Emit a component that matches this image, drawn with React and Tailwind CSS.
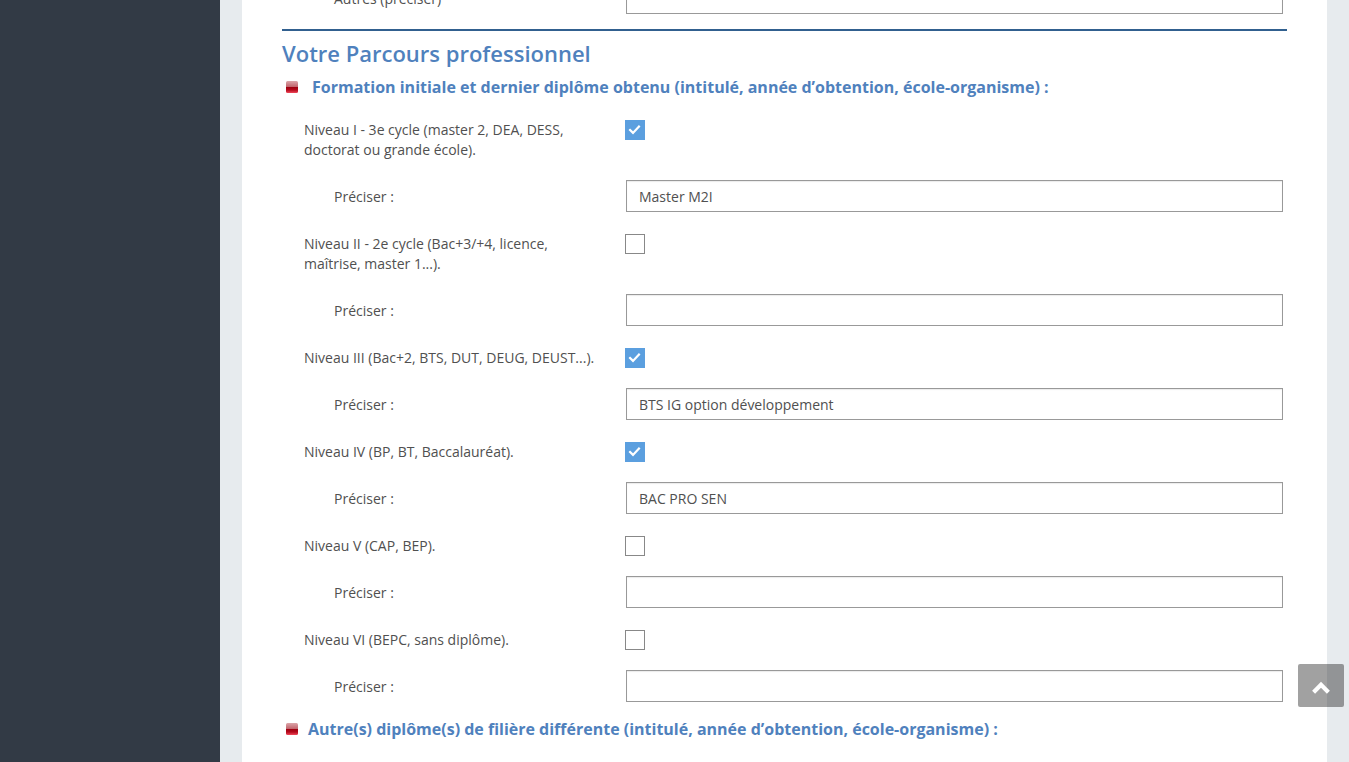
import React, { useState } from "react";

const niveaux = [
  {
    id: "niveau1",
    label: "Niveau I - 3e cycle (master 2, DEA, DESS, doctorat ou grande école).",
    checked: true,
    detail: "Master M2I",
  },
  {
    id: "niveau2",
    label: "Niveau II - 2e cycle (Bac+3/+4, licence, maîtrise, master 1...).",
    checked: false,
    detail: "",
  },
  {
    id: "niveau3",
    label: "Niveau III (Bac+2, BTS, DUT, DEUG, DEUST...).",
    checked: true,
    detail: "BTS IG option développement",
  },
  {
    id: "niveau4",
    label: "Niveau IV (BP, BT, Baccalauréat).",
    checked: true,
    detail: "BAC PRO SEN",
  },
  {
    id: "niveau5",
    label: "Niveau V (CAP, BEP).",
    checked: false,
    detail: "",
  },
  {
    id: "niveau6",
    label: "Niveau VI (BEPC, sans diplôme).",
    checked: false,
    detail: "",
  },
];

const TextInput = (props) => (
  <div className="pl-px">
    <input
      type="text"
      className="block h-8 w-full border border-[#999] bg-white px-3 text-sm text-[#505050] shadow-[inset_0_1px_1px_rgba(0,0,0,0.08)] outline-none focus:border-[#5b9fdf]"
      {...props}
    />
  </div>
);

const CheckBox = (props) => (
  <span className="grid size-5">
    <input
      type="checkbox"
      className="peer col-start-1 row-start-1 size-5 appearance-none border border-[#888] bg-white checked:border-[#5b9fdf] checked:bg-[#5b9fdf]"
      {...props}
    />
    <svg
      viewBox="0 0 20 20"
      className="pointer-events-none invisible col-start-1 row-start-1 size-5 peer-checked:visible"
      fill="none"
      stroke="#fff"
      strokeWidth="2.2"
    >
      <path d="M4.3 9.2 L8 12.9 L14.7 5.8" />
    </svg>
  </span>
);

const Bullet = () => (
  <svg viewBox="0 0 12 12" className="size-3 shrink-0" aria-hidden="true">
    <defs>
      <linearGradient id="bullet" x1="0" y1="0" x2="0" y2="1">
        <stop offset="0" stopColor="#dba5a9" />
        <stop offset="0.5" stopColor="#c0626a" />
        <stop offset="0.54" stopColor="#a00010" />
        <stop offset="0.75" stopColor="#b50a1c" />
        <stop offset="1" stopColor="#f0485a" />
      </linearGradient>
    </defs>
    <rect width="12" height="12" rx="1.5" fill="url(#bullet)" />
  </svg>
);

const Niveau = ({ niveau }) => {
  const [checked, setChecked] = useState(niveau.checked);
  const [detail, setDetail] = useState(niveau.detail);

  return (
    <div className="flex flex-col gap-5">
      <div className="grid grid-cols-[321px_1fr]">
        <label htmlFor={niveau.id} className="pr-6">
          {niveau.label}
        </label>
        <CheckBox
          id={niveau.id}
          checked={checked}
          onChange={(e) => setChecked(e.target.checked)}
        />
      </div>
      <div className="grid grid-cols-[321px_1fr]">
        <label htmlFor={`${niveau.id}-detail`} className="pt-[7px] pl-[30px]">
          Préciser :
        </label>
        <TextInput
          id={`${niveau.id}-detail`}
          value={detail}
          onChange={(e) => setDetail(e.target.value)}
        />
      </div>
    </div>
  );
};

const App = () => {
  return (
    <div className="flex min-h-screen overflow-hidden bg-[#e7ebee] font-['Open_Sans',sans-serif] text-sm leading-5 text-[#505050]">
      {/* Sidebar */}
      <aside className="w-[220px] shrink-0 bg-[#323a45]"></aside>

      <main className="mx-[22px] flex-1 bg-white px-10">
        {/* end of the previous section, scrolled under the top edge */}
        <div className="-mt-[18px] grid grid-cols-[321px_1fr] pr-1 pl-[22px]">
          <label htmlFor="autres" className="pt-[7px] pl-[30px]">
            Autres (préciser)
          </label>
          <TextInput id="autres" />
        </div>

        <hr className="mt-[15px] border-t-2 border-[#31608f]" />

        <h2 className="pt-[7px] text-[22px] leading-[30px] font-semibold text-[#4f81bd]">
          Votre Parcours professionnel
        </h2>

        <h3 className="flex items-center gap-[14px] pt-[9px] pl-1 text-base leading-5 font-bold text-[#4f81bd]">
          <Bullet />
          Formation initiale et dernier diplôme obtenu (intitulé, année
          d’obtention, école-organisme) :
        </h3>

        <form className="flex flex-col gap-[22px] pt-[23px] pr-1 pl-[22px]">
          {niveaux.map((niveau) => (
            <Niveau key={niveau.id} niveau={niveau} />
          ))}
        </form>

        <h3 className="flex items-center gap-[10px] pt-[17px] pb-5 pl-1 text-base leading-5 font-bold text-[#4f81bd]">
          <Bullet />
          Autre(s) diplôme(s) de filière différente (intitulé, année
          d’obtention, école-organisme) :
        </h3>
      </main>

      {/* Back to top */}
      <button
        type="button"
        aria-label="Haut de page"
        className="fixed right-[5px] bottom-[55px] flex h-[43px] w-[46px] items-center justify-center rounded-xs bg-black/37 pt-1 text-white"
        onClick={() => window.scrollTo({ top: 0, behavior: "smooth" })}
      >
        <svg
          viewBox="0 0 20 20"
          className="size-5"
          fill="none"
          stroke="currentColor"
          strokeWidth="4.2"
        >
          <path d="M2.6 14.2 L10 6.8 L17.4 14.2" />
        </svg>
      </button>
    </div>
  );
};

export default App;
